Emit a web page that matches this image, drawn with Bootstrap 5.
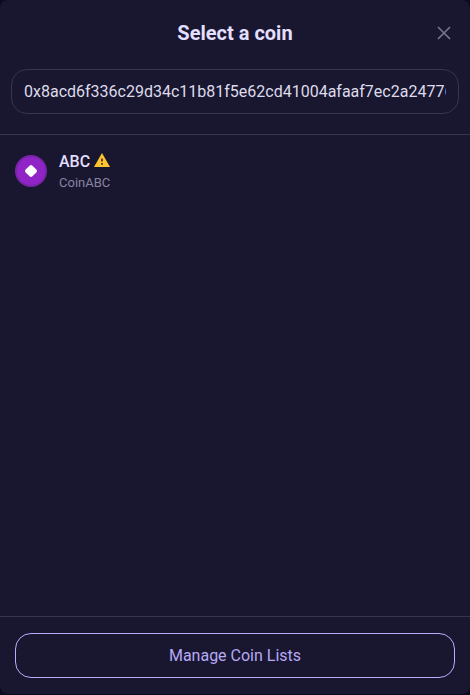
<!DOCTYPE html>
<html lang="en">
<head>
<meta charset="utf-8">
<meta name="viewport" content="width=device-width, initial-scale=1">
<title>Select a coin</title>
<link href="https://cdn.jsdelivr.net/npm/bootstrap@5.3.0/dist/css/bootstrap.min.css" rel="stylesheet">
<style>
body{background:#0c0a1c;font-family:Roboto,sans-serif;overflow:hidden}
.coin-dialog{height:694px;background:#191630;border-radius:8px;color:#e3dfff}
.dialog-head{height:134px;padding:0 11px}
.title-row{height:69px;padding-bottom:3px}
.dialog-title{font-size:20px;line-height:24px;font-weight:700}
.close-btn{right:-4px;width:38px;height:38px;color:#77738f}
.search-box.form-control{height:45px;padding:0 12px;border:1px solid #38334f;border-radius:16px;background:transparent;color:#dedbea;font-size:16px;box-shadow:none}
.coin-list{border-top:1px solid #38344e;padding:16px 15px}
.coin-row{gap:12px;height:40px}
.coin-name{font-size:16px;line-height:22px;font-weight:500;padding-top:2px}
.coin-name svg{margin-top:-4px}
.coin-sub{font-size:13px;line-height:20px;color:#8884a0}
.dialog-foot{height:78px;border-top:1px solid #38344e;padding:16px 15px}
.manage-btn.btn{height:45px;border:1px solid #b8adff;border-radius:16px;color:#b6aaf5;font-size:16px;padding:0}
</style>
<script src="https://cdn.jsdelivr.net/npm/bootstrap@5.3.0/dist/js/bootstrap.bundle.min.js"></script>
</head>
<body>
<main class="coin-dialog d-flex flex-column">
  <header class="dialog-head">
    <div class="title-row position-relative d-flex align-items-center justify-content-center">
      <h1 class="dialog-title m-0">Select a coin</h1>
      <button type="button" class="close-btn btn p-0 border-0 position-absolute d-flex align-items-center justify-content-center" aria-label="Close">
        <svg width="14" height="14" viewBox="0 0 14 14" fill="none" stroke="currentColor" stroke-width="1.7"><path d="M1 1l12 12M13 1L1 13"/></svg>
      </button>
    </div>
    <input class="search-box form-control" type="text" aria-label="Search coin" value="0x8acd6f336c29d34c11b81f5e62cd41004afaaf7ec2a24776">
  </header>
  <section class="coin-list flex-grow-1">
    <div class="coin-row d-flex align-items-center">
      <svg width="32" height="32" viewBox="0 0 32 32"><circle cx="16" cy="16" r="16" fill="#7925a8"/><circle cx="16" cy="16" r="14" fill="#9024c6"/><rect x="11.2" y="11.2" width="9.6" height="9.6" rx="2" fill="#fff" transform="rotate(45 16 16)"/></svg>
      <div>
        <div class="coin-name d-flex align-items-center gap-1">ABC
          <svg width="16" height="14" viewBox="0 0 16 14"><path d="M8 0l8 14H0z" fill="#ffc52e"/><path d="M7.1 5.4h1.8v3.2H7.1zM7.1 10h1.8v1.7H7.1z" fill="#4a3a2c"/></svg>
        </div>
        <div class="coin-sub">CoinABC</div>
      </div>
    </div>
  </section>
  <footer class="dialog-foot">
    <button type="button" class="manage-btn btn w-100">Manage Coin Lists</button>
  </footer>
</main>
</body>
</html>
